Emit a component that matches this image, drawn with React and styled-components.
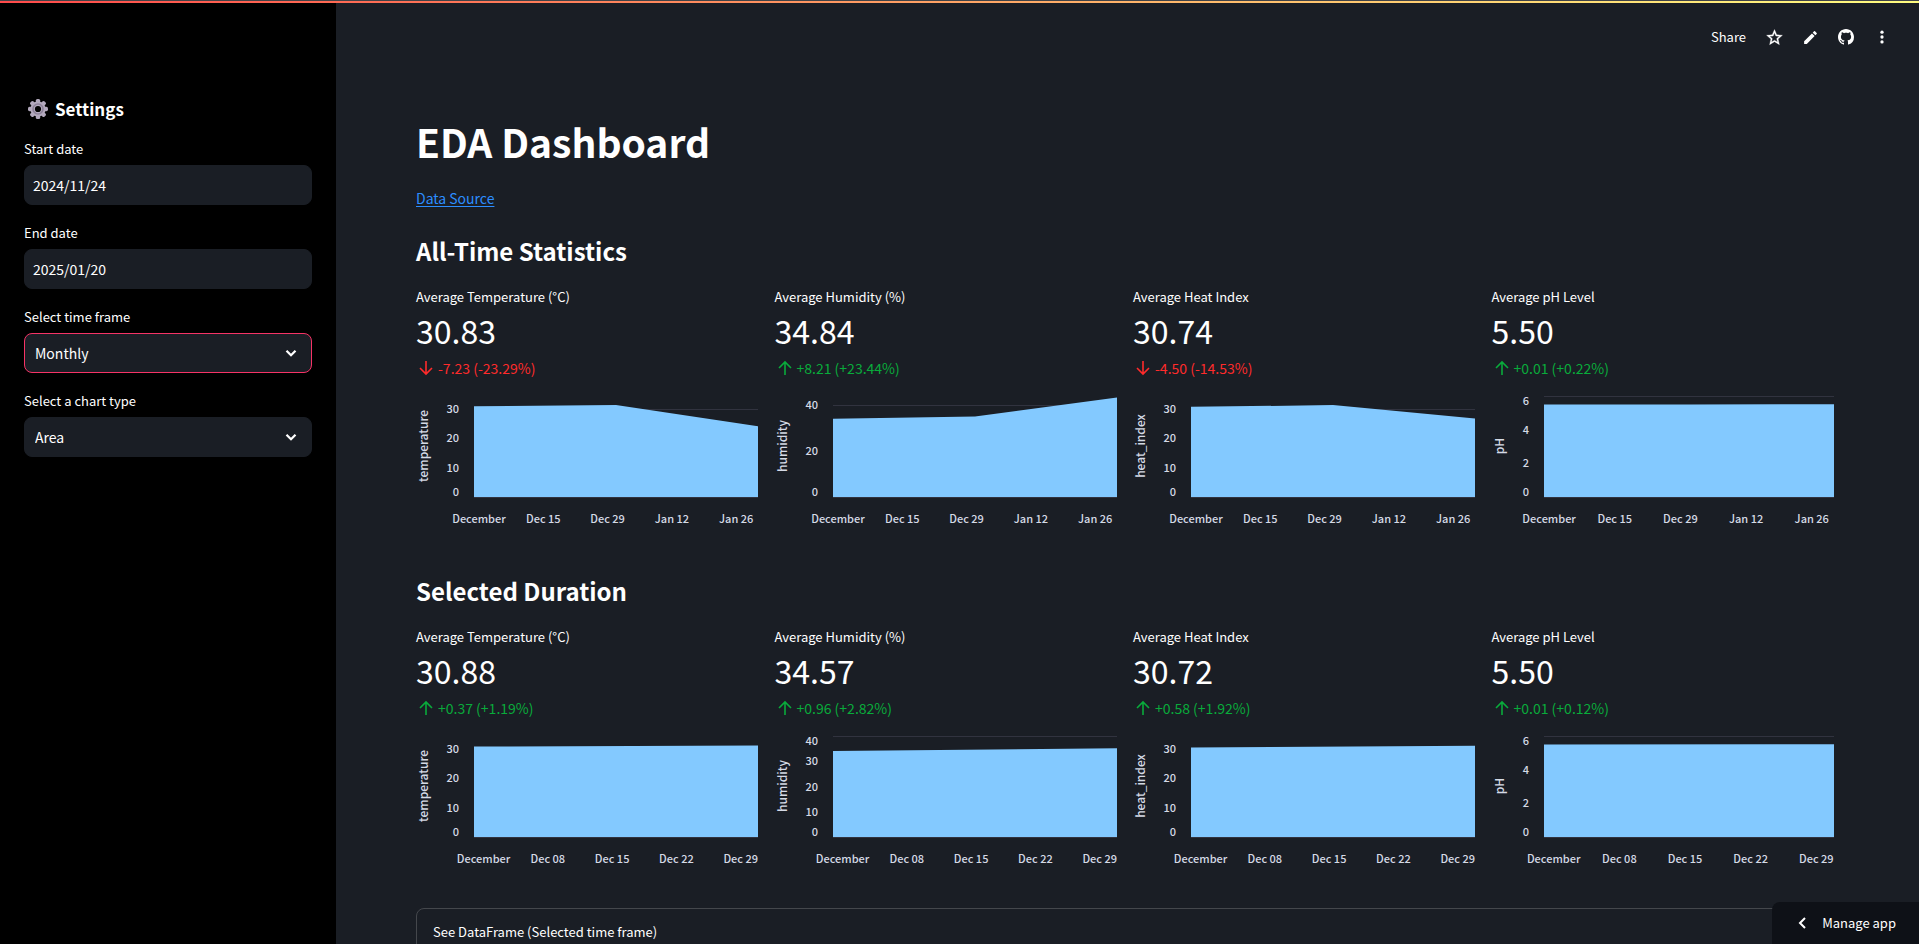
import React, { useLayoutEffect, useRef, useState } from "react";
import styled, { createGlobalStyle } from "styled-components";

const GlobalStyle = createGlobalStyle`
  * { box-sizing: border-box; }
  html, body { margin: 0; background: #1a1e25; }
  body {
    color: #ffffff;
    font-family: "Noto Sans CJK SC", "Noto Sans", sans-serif;
    font-size: 14px;
    line-height: 24px;
  }
  button, input, select { font: inherit; color: inherit; }
`;

const Page = styled.div`
  display: flex;
  height: 100vh;
  overflow: hidden;
`;

const Decoration = styled.div`
  position: fixed;
  inset: 0 0 auto 0;
  height: 3px;
  border-top: 1px solid #404348;
  background: linear-gradient(90deg, #ff4b4b, #fffd80);
  z-index: 3;
`;

const Sidebar = styled.aside`
  flex: 0 0 336px;
  padding: 97px 24px 24px;
  background: #000000;
`;

const SidebarTitle = styled.h2`
  display: flex;
  align-items: center;
  gap: 7px;
  margin: 0 0 14px;
  padding-left: 4px;
  font-size: 17px;
  font-weight: 700;
  line-height: 24px;
`;

const Field = styled.div`
  display: flex;
  flex-direction: column;
  margin-bottom: 14px;
`;

const FieldLabel = styled.label`
  margin-bottom: 2px;
  font-size: 13px;
  line-height: 28px;
`;

const control = `
  width: 100%;
  height: 40px;
  border-radius: 8px;
  background: #1a1e25;
  outline: none;
`;

const DateInput = styled.input`
  ${control}
  padding: 0 8px;
  border: 1px solid #1a1e25;
`;

const SelectBox = styled.div`
  display: grid;
  align-items: center;
  > * { grid-area: 1 / 1; }
  > svg { justify-self: end; margin-right: 12px; pointer-events: none; }
`;

const Select = styled.select`
  ${control}
  appearance: none;
  padding: 0 10px;
  border: 1px solid ${(p) => (p.$active ? "#f63366" : "#1a1e25")};
`;

const Main = styled.main`
  flex: 1;
  min-width: 0;
  overflow: hidden;
`;

const Toolbar = styled.header`
  display: flex;
  justify-content: flex-end;
  align-items: center;
  gap: 12px;
  height: 72px;
  padding: 2px 25px 0 0;
`;

const ToolButton = styled.button`
  display: flex;
  align-items: center;
  justify-content: center;
  min-width: 24px;
  height: 32px;
  margin: 0;
  padding: 0;
  border: 0;
  background: none;
  font-size: ${(p) => (p.$text ? "13px" : "14px")};
  margin-right: ${(p) => (p.$text ? "4px" : "0")};
`;

const Content = styled.div`
  padding: 41px 85px 0 80px;
`;

const Title = styled.h1`
  margin: 0;
  font-size: 39px;
  font-weight: 700;
  line-height: 56px;
`;

const SourceLink = styled.a`
  display: block;
  width: max-content;
  margin: 17px 0 18px;
  color: #2c8dff;
  text-underline-offset: 2px;
`;

const Section = styled.section`
  margin-bottom: 28px;
`;

const Heading = styled.h2`
  margin: 0 0 13px;
  font-size: 24px;
  font-weight: 700;
  line-height: 46px;
`;

const MetricGrid = styled.div`
  display: grid;
  grid-template-columns: repeat(4, minmax(0, 1fr));
  gap: 16px;
`;

const Metric = styled.article`
  display: flex;
  flex-direction: column;
`;

const MetricLabel = styled.h3`
  margin: 0;
  font-size: 13px;
  font-weight: 400;
  line-height: 20px;
`;

const MetricValue = styled.div`
  font-size: 32px;
  line-height: 46px;
`;

const Delta = styled.div`
  display: flex;
  align-items: center;
  gap: 3px;
  margin-bottom: 8px;
  line-height: 30px;
  color: ${(p) => (p.$down ? "#ff2b2b" : "#09ab3b")};
  > svg { margin-left: 1px; }
`;

const Plot = styled.svg`
  display: block;
  width: 100%;
  height: 149px;
  overflow: visible;
  fill: #d5dae5;
  font-size: 11px;
  font-weight: 500;
`;

const AxisTitle = styled.text`
  font-size: 12px;
  font-weight: 500;
`;

const Expander = styled.details`
  border: 1px solid #44474c;
  border-radius: 8px;
  height: 60px;
`;

const Summary = styled.summary`
  padding: 11px 16px;
  font-size: 13px;
  list-style: none;
`;

const ManageButton = styled.button`
  position: fixed;
  right: 0;
  bottom: 0;
  z-index: 2;
  display: flex;
  align-items: center;
  gap: 10px;
  height: 42px;
  padding: 0 23px 0 20px;
  border: 0;
  border-radius: 8px 0 0 0;
  background: #0e1117;
  font-size: 13px;
`;

const GearIcon = () => (
  <svg width="20" height="20" viewBox="0 0 20 20" aria-hidden="true">
    <g fill="#b3a9bd">
      {[0, 45, 90, 135].map((a) => (
        <rect key={a} x="7.8" y="0" width="4.4" height="20" rx="1.6" transform={`rotate(${a} 10 10)`} />
      ))}
      <circle cx="10" cy="10" r="7.6" />
    </g>
    <circle cx="10" cy="10" r="5" fill="none" stroke="#8c8198" strokeWidth="1.6" />
    <circle cx="10" cy="10" r="3.1" fill="#000000" />
  </svg>
);

const ChevronDown = () => (
  <svg width="18" height="18" viewBox="0 0 24 24" fill="none" stroke="#ffffff" strokeWidth="3" aria-hidden="true">
    <path d="M6 9l6 6 6-6" />
  </svg>
);

const ArrowIcon = ({ down }) => (
  <svg width="18" height="18" viewBox="0 0 18 18" fill="none" stroke="currentColor" strokeWidth="1.6" aria-hidden="true">
    <path d={down ? "M9 2v13M3 9l6 6 6-6" : "M9 16V3M3 9l6-6 6 6"} />
  </svg>
);

const StarIcon = () => (
  <svg width="19" height="19" viewBox="0 0 24 24" fill="#ffffff" stroke="#ffffff" strokeWidth="0.4" aria-hidden="true">
    <path d="M22 9.24l-7.19-.62L12 2 9.19 8.63 2 9.24l5.46 4.73L5.82 21 12 17.27 18.18 21l-1.63-7.03L22 9.24zM12 15.4l-3.76 2.27 1-4.28-3.32-2.88 4.38-.38L12 6.1l1.71 4.04 4.38.38-3.32 2.88 1 4.28L12 15.4z" />
  </svg>
);

const PencilIcon = () => (
  <svg width="17" height="17" viewBox="0 0 24 24" fill="#ffffff" aria-hidden="true">
    <path d="M3 17.25V21h3.75L17.81 9.94l-3.75-3.75L3 17.25zM20.71 7.04a1 1 0 0 0 0-1.41l-2.34-2.34a1 1 0 0 0-1.41 0l-1.83 1.83 3.75 3.75 1.83-1.83z" />
  </svg>
);

const GithubIcon = () => (
  <svg width="16" height="16" viewBox="0 0 16 16" fill="#ffffff" aria-hidden="true">
    <path d="M8 0C3.58 0 0 3.58 0 8c0 3.54 2.29 6.53 5.47 7.59.4.07.55-.17.55-.38 0-.19-.01-.82-.01-1.49-2.01.37-2.53-.49-2.69-.94-.09-.23-.48-.94-.82-1.13-.28-.15-.68-.52-.01-.53.63-.01 1.08.58 1.23.82.72 1.21 1.87.87 2.33.66.07-.52.28-.87.51-1.07-1.78-.2-3.64-.89-3.64-3.95 0-.87.31-1.59.82-2.15-.08-.2-.36-1.02.08-2.12 0 0 .67-.21 2.2.82.64-.18 1.32-.27 2-.27s1.36.09 2 .27c1.53-1.04 2.2-.82 2.2-.82.44 1.1.16 1.92.08 2.12.51.56.82 1.27.82 2.15 0 3.07-1.87 3.75-3.65 3.95.29.25.54.73.54 1.48 0 1.07-.01 1.93-.01 2.2 0 .21.15.46.55.38A8.01 8.01 0 0 0 16 8c0-4.42-3.58-8-8-8z" />
  </svg>
);

const DotsIcon = () => (
  <svg width="18" height="18" viewBox="0 0 24 24" fill="#ffffff" aria-hidden="true">
    <circle cx="12" cy="5.5" r="2.2" />
    <circle cx="12" cy="12" r="2.2" />
    <circle cx="12" cy="18.5" r="2.2" />
  </svg>
);

const ChevronLeft = () => (
  <svg width="20" height="20" viewBox="0 0 20 20" fill="none" stroke="#ffffff" strokeWidth="2" aria-hidden="true">
    <path d="M13 5l-5 5 5 5" />
  </svg>
);

const PLOT_TOP = 5;
const PLOT_HEIGHT = 101;

function AreaChart({ name, inset, max, ticks, values, dates, firstDate }) {
  const ref = useRef(null);
  const [width, setWidth] = useState(342);

  useLayoutEffect(() => {
    const measure = () => setWidth(Math.floor(ref.current.getBoundingClientRect().width));
    measure();
    const observer = new ResizeObserver(measure);
    observer.observe(ref.current);
    return () => observer.disconnect();
  }, []);

  const bottom = PLOT_TOP + PLOT_HEIGHT;
  const plotWidth = width - inset;
  const y = (v) => bottom - (v / max) * PLOT_HEIGHT;
  const points = values.map((v, i) => `${inset + (plotWidth * i) / (values.length - 1)},${y(v)}`);
  const labelShift = (v) => (v === 0 ? -1 : v === max ? 9 : 4);

  return (
    <Plot ref={ref} role="img" aria-label={`${name} area chart`}>
      {ticks.map((t) => (
        <line key={t} x1={inset} x2={width} y1={Math.round(y(t)) + 0.5} y2={Math.round(y(t)) + 0.5} stroke="#31333f" />
      ))}
      <polygon fill="#83c9ff" points={`${inset},${bottom} ${points.join(" ")} ${width},${bottom}`} />
      {ticks.map((t) => (
        <text key={t} x={inset - 15} y={Math.round(y(t)) + labelShift(t)} textAnchor="end">{t}</text>
      ))}
      {dates.map((d, i) => (
        <text key={d} x={inset + plotWidth * (firstDate + i * 0.2264)} y={bottom + 26} textAnchor="middle">{d}</text>
      ))}
      <AxisTitle transform={`translate(12 ${PLOT_TOP + 50}) rotate(-90)`} textAnchor="middle">{name}</AxisTitle>
    </Plot>
  );
}

const NARROW = 52;
const WIDE = 58;

const sections = [
  {
    title: "All-Time Statistics",
    dates: ["December", "Dec 15", "Dec 29", "Jan 12", "Jan 26"],
    firstDate: 0.0176,
    metrics: [
      { label: "Average Temperature (°C)", value: "30.83", delta: "-7.23 (-23.29%)", down: true, name: "temperature", inset: WIDE, max: 34.4, ticks: [0, 10, 20, 30], values: [30.9, 31.3, 24.1] },
      { label: "Average Humidity (%)", value: "34.84", delta: "+8.21 (+23.44%)", name: "humidity", inset: WIDE, max: 43.9, ticks: [0, 20, 40], values: [34, 35, 43.2] },
      { label: "Average Heat Index", value: "30.74", delta: "-4.50 (-14.53%)", down: true, name: "heat_index", inset: WIDE, max: 34.4, ticks: [0, 10, 20, 30], values: [30.7, 31.3, 26.7] },
      { label: "Average pH Level", value: "5.50", delta: "+0.01 (+0.22%)", name: "pH", inset: NARROW, max: 6, ticks: [0, 2, 4, 6], values: [5.5, 5.5, 5.51] },
    ],
  },
  {
    title: "Selected Duration",
    dates: ["December", "Dec 08", "Dec 15", "Dec 22", "Dec 29"],
    firstDate: 0.0335,
    metrics: [
      { label: "Average Temperature (°C)", value: "30.88", delta: "+0.37 (+1.19%)", name: "temperature", inset: WIDE, max: 34.4, ticks: [0, 10, 20, 30], values: [30.8, 31.2] },
      { label: "Average Humidity (%)", value: "34.57", delta: "+0.96 (+2.82%)", name: "humidity", inset: WIDE, max: 40, ticks: [0, 10, 20, 30, 40], values: [34.1, 35.1] },
      { label: "Average Heat Index", value: "30.72", delta: "+0.58 (+1.92%)", name: "heat_index", inset: WIDE, max: 34.4, ticks: [0, 10, 20, 30], values: [30.5, 31.1] },
      { label: "Average pH Level", value: "5.50", delta: "+0.01 (+0.12%)", name: "pH", inset: NARROW, max: 6, ticks: [0, 2, 4, 6], values: [5.5, 5.51] },
    ],
  },
];

const dateFields = [
  { id: "start-date", label: "Start date", value: "2024/11/24" },
  { id: "end-date", label: "End date", value: "2025/01/20" },
];

const selectFields = [
  { id: "time-frame", label: "Select time frame", options: ["Monthly", "Weekly", "Daily"], active: true },
  { id: "chart-type", label: "Select a chart type", options: ["Area", "Bar"] },
];

export default function App() {
  return (
    <>
      <GlobalStyle />
      <Decoration />
      <Page>
        <Sidebar>
          <SidebarTitle><GearIcon />Settings</SidebarTitle>
          {dateFields.map((f) => (
            <Field key={f.id}>
              <FieldLabel htmlFor={f.id}>{f.label}</FieldLabel>
              <DateInput id={f.id} type="text" defaultValue={f.value} />
            </Field>
          ))}
          {selectFields.map((f) => (
            <Field key={f.id}>
              <FieldLabel htmlFor={f.id}>{f.label}</FieldLabel>
              <SelectBox>
                <Select id={f.id} $active={f.active}>
                  {f.options.map((o) => <option key={o}>{o}</option>)}
                </Select>
                <ChevronDown />
              </SelectBox>
            </Field>
          ))}
        </Sidebar>
        <Main>
          <Toolbar>
            <ToolButton $text>Share</ToolButton>
            <ToolButton aria-label="Favorite"><StarIcon /></ToolButton>
            <ToolButton aria-label="Edit"><PencilIcon /></ToolButton>
            <ToolButton aria-label="View on GitHub"><GithubIcon /></ToolButton>
            <ToolButton aria-label="Menu"><DotsIcon /></ToolButton>
          </Toolbar>
          <Content>
            <Title>EDA Dashboard</Title>
            <SourceLink href="#source">Data Source</SourceLink>
            {sections.map((s) => (
              <Section key={s.title}>
                <Heading>{s.title}</Heading>
                <MetricGrid>
                  {s.metrics.map((m) => (
                    <Metric key={m.name}>
                      <MetricLabel>{m.label}</MetricLabel>
                      <MetricValue>{m.value}</MetricValue>
                      <Delta $down={m.down}><ArrowIcon down={m.down} />{m.delta}</Delta>
                      <AreaChart {...m} dates={s.dates} firstDate={s.firstDate} />
                    </Metric>
                  ))}
                </MetricGrid>
              </Section>
            ))}
            <Expander>
              <Summary>See DataFrame (Selected time frame)</Summary>
            </Expander>
          </Content>
        </Main>
      </Page>
      <ManageButton><ChevronLeft />Manage app</ManageButton>
    </>
  );
}
